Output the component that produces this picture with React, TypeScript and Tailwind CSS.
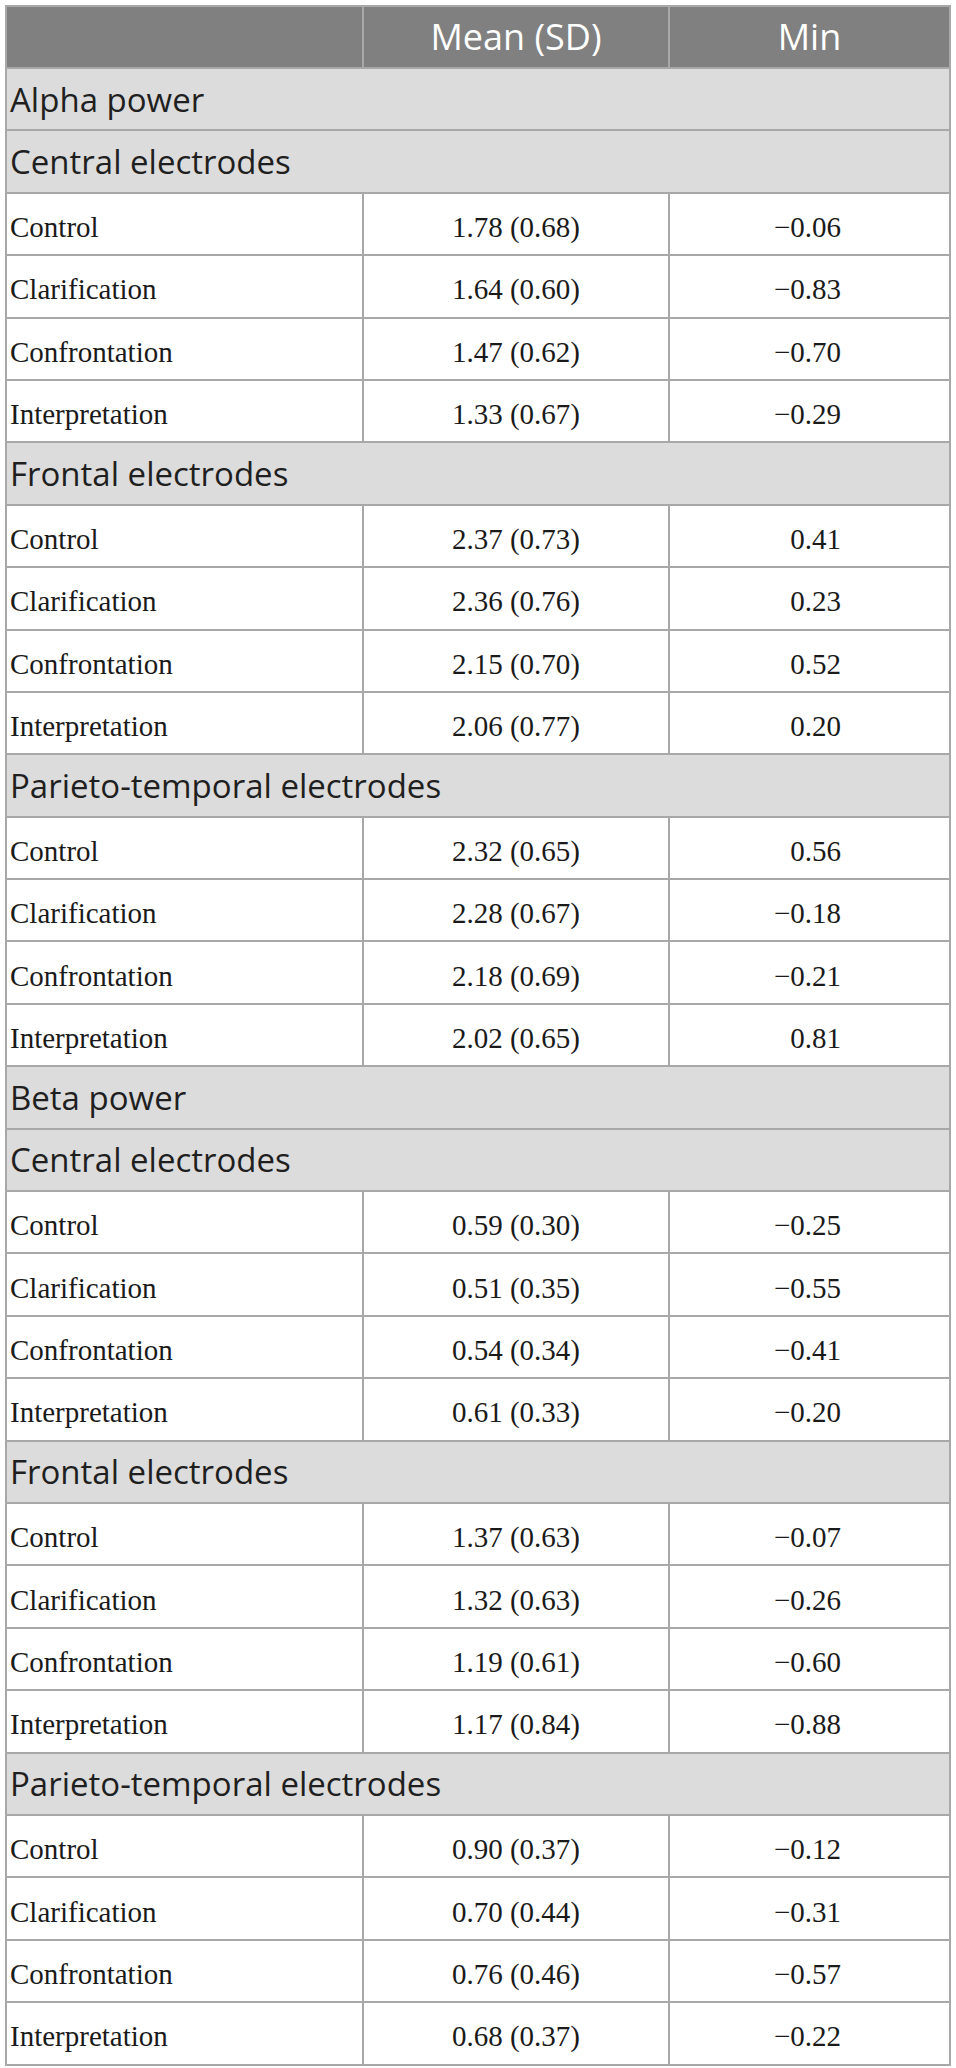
const sections = [
  {
    band: 'Alpha power',
    groups: [
      {
        title: 'Central electrodes',
        rows: [
          ['Control', '1.78 (0.68)', '−0.06'],
          ['Clarification', '1.64 (0.60)', '−0.83'],
          ['Confrontation', '1.47 (0.62)', '−0.70'],
          ['Interpretation', '1.33 (0.67)', '−0.29'],
        ],
      },
      {
        title: 'Frontal electrodes',
        rows: [
          ['Control', '2.37 (0.73)', '0.41'],
          ['Clarification', '2.36 (0.76)', '0.23'],
          ['Confrontation', '2.15 (0.70)', '0.52'],
          ['Interpretation', '2.06 (0.77)', '0.20'],
        ],
      },
      {
        title: 'Parieto-temporal electrodes',
        rows: [
          ['Control', '2.32 (0.65)', '0.56'],
          ['Clarification', '2.28 (0.67)', '−0.18'],
          ['Confrontation', '2.18 (0.69)', '−0.21'],
          ['Interpretation', '2.02 (0.65)', '0.81'],
        ],
      },
    ],
  },
  {
    band: 'Beta power',
    groups: [
      {
        title: 'Central electrodes',
        rows: [
          ['Control', '0.59 (0.30)', '−0.25'],
          ['Clarification', '0.51 (0.35)', '−0.55'],
          ['Confrontation', '0.54 (0.34)', '−0.41'],
          ['Interpretation', '0.61 (0.33)', '−0.20'],
        ],
      },
      {
        title: 'Frontal electrodes',
        rows: [
          ['Control', '1.37 (0.63)', '−0.07'],
          ['Clarification', '1.32 (0.63)', '−0.26'],
          ['Confrontation', '1.19 (0.61)', '−0.60'],
          ['Interpretation', '1.17 (0.84)', '−0.88'],
        ],
      },
      {
        title: 'Parieto-temporal electrodes',
        rows: [
          ['Control', '0.90 (0.37)', '−0.12'],
          ['Clarification', '0.70 (0.44)', '−0.31'],
          ['Confrontation', '0.76 (0.46)', '−0.57'],
          ['Interpretation', '0.68 (0.37)', '−0.22'],
        ],
      },
    ],
  },
]

const sans = "font-['Open_Sans',sans-serif]"
const serif = "font-['Liberation_Serif',serif]"

export default function App() {
  return (
    <div className="min-h-screen bg-white pt-[5px] pl-[5px]">
      <table className="w-[944px] table-fixed border-collapse border-2 border-[#a8a8a8]">
        <colgroup>
          <col className="w-[357px]" />
          <col className="w-[306px]" />
          <col className="w-[281px]" />
        </colgroup>
        <thead>
          <tr className="h-[62px] bg-[#808080]">
            <th className="border-2 border-[#a8a8a8]"></th>
            <th className={`border-2 border-[#a8a8a8] text-center text-[36px] leading-none font-normal text-white ${sans}`}>Mean (SD)</th>
            <th className={`border-2 border-[#a8a8a8] text-center text-[36px] leading-none font-normal text-white ${sans}`}>Min</th>
          </tr>
        </thead>
        <tbody>
          {sections.map((s) => (
            <Section key={s.band} band={s.band} groups={s.groups} />
          ))}
        </tbody>
      </table>
    </div>
  )
}

function Section({ band, groups }: { band: string; groups: { title: string; rows: string[][] }[] }) {
  return (
    <>
      <BandRow label={band} />
      {groups.map((g) => (
        <Group key={g.title} title={g.title} rows={g.rows} />
      ))}
    </>
  )
}

// data rows: serif, min column lined up on the right edge of the numbers
function Group({ title, rows }: { title: string; rows: string[][] }) {
  return (
    <>
      <BandRow label={title} />
      {rows.map((r) => (
        <tr key={r[0]} className="h-[62.4px] bg-white">
          <td className={`border-2 border-[#a8a8a8] pl-[3px] pt-[7px] text-[29px] leading-none text-[#1a1a1a] ${serif}`}>{r[0]}</td>
          <td className={`border-2 border-[#a8a8a8] pt-[7px] text-center text-[29px] leading-none text-[#1a1a1a] ${serif}`}>{r[1]}</td>
          <td className={`border-2 border-[#a8a8a8] pt-[7px] pr-[108px] text-right text-[29px] leading-none text-[#1a1a1a] ${serif}`}>{r[2]}</td>
        </tr>
      ))}
    </>
  )
}

function BandRow({ label }: { label: string }) {
  return (
    <tr className="h-[62.4px] bg-[#dcdcdc]">
      <td colSpan={3} className={`border-2 border-[#a8a8a8] pl-[3px] text-[33px] leading-none text-[#1f1f1f] ${sans}`}>
        {label}
      </td>
    </tr>
  )
}
